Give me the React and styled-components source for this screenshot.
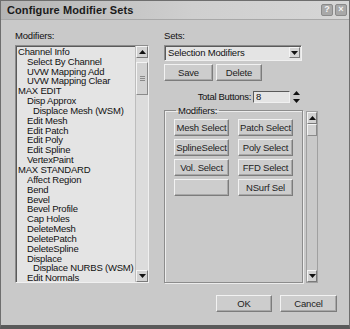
import React, { useState } from 'react';
import styled, { createGlobalStyle } from 'styled-components';

const GlobalStyle = createGlobalStyle`
  html, body {
    margin: 0;
    padding: 0;
    background: #c8c8c8;
  }
  * {
    box-sizing: border-box;
  }
`;

const Window = styled.div`
  width: 350px;
  height: 329px;
  display: flex;
  flex-direction: column;
  background: #c9c9c9;
  border: 1px solid #6e6e6e;
  border-bottom: 4px solid #5a5a5a;
  font-family: 'Liberation Sans', Arial, sans-serif;
  font-size: 9.5px;
  color: #111;
  overflow: hidden;
`;

const TitleBar = styled.div`
  height: 20px;
  display: flex;
  align-items: center;
  justify-content: space-between;
  padding: 0 2px 0 6px;
  background: linear-gradient(to right, #b4b4b4, #cfcfcf 55%, #d6d6d6);
  border-bottom: 1px solid #a8a8a8;
`;

const Title = styled.span`
  font-weight: bold;
  font-size: 11px;
  letter-spacing: 0.1px;
  color: #1a1a1a;
`;

const TitleButtons = styled.div`
  display: flex;
  gap: 2px;
`;

const TitleButton = styled.div`
  width: 12px;
  height: 12px;
  display: flex;
  align-items: center;
  justify-content: center;
  background: #a8a8a8;
  border: 1px solid #8a8a8a;
  border-radius: 2px;
  color: #f4f4f4;
  font-size: 9px;
  font-weight: bold;
  line-height: 1;
`;

const Body = styled.div`
  flex: 1;
  display: flex;
  gap: 15px;
  padding: 10px 0 0 14px;
`;

const LeftColumn = styled.div`
  width: 134px;
  display: flex;
  flex-direction: column;
`;

const Label = styled.div`
  height: 15px;
  line-height: 12px;
  letter-spacing: -0.2px;
`;

const ListBox = styled.div`
  height: 238px;
  display: flex;
  background: #e4e4e4;
  border: 1px solid #8c8c8c;
  border-right-color: #f0f0f0;
  border-bottom-color: #f0f0f0;
  box-shadow: inset 1px 1px 0 #5a5a5a;
`;

const ListItems = styled.div`
  flex: 1;
  padding: 1px 0 0 2px;
  overflow: hidden;
`;

const indents = [0, 9, 15];

const ListItem = styled.div`
  height: 9.85px;
  line-height: 10px;
  white-space: nowrap;
  letter-spacing: -0.2px;
  padding-left: ${(p) => indents[p.$level]}px;
`;

const ScrollBar = styled.div`
  width: 13px;
  display: flex;
  flex-direction: column;
  background: #dcdcdc;
  border-left: 1px solid #bdbdbd;
`;

const ScrollArrow = styled.div`
  height: 12px;
  display: flex;
  align-items: center;
  justify-content: center;
  background: #d2d2d2;
  border: 1px solid;
  border-color: #f4f4f4 #7a7a7a #7a7a7a #f4f4f4;
  color: #222;
`;

const ScrollTrack = styled.div`
  flex: 1;
  display: flex;
  flex-direction: column;
  padding-top: ${(p) => p.$offset || 0}px;
`;

const ScrollThumb = styled.div`
  height: ${(p) => p.$size}px;
  display: flex;
  align-items: center;
  justify-content: center;
  background: #d2d2d2;
  border: 1px solid;
  border-color: #f4f4f4 #8a8a8a #8a8a8a #f4f4f4;
`;

const Grip = styled.div`
  width: 5px;
  height: 5px;
  background: repeating-linear-gradient(to bottom, #8a8a8a 0 1px, transparent 1px 2px);
`;

const RightColumn = styled.div`
  width: 155px;
  display: flex;
  flex-direction: column;
`;

const Select = styled.div`
  width: 138px;
  height: 16px;
  display: flex;
  align-items: center;
  background: #e4e4e4;
  border: 1px solid #8c8c8c;
  border-right-color: #f0f0f0;
  border-bottom-color: #f0f0f0;
  box-shadow: inset 1px 1px 0 #5a5a5a;
  padding: 1px 1px 1px 3px;
`;

const SelectText = styled.span`
  flex: 1;
  letter-spacing: -0.2px;
`;

const SelectArrow = styled.div`
  width: 11px;
  height: 11px;
  display: flex;
  align-items: center;
  justify-content: center;
  background: #d4d4d4;
  border: 1px solid;
  border-color: #f4f4f4 #7a7a7a #7a7a7a #f4f4f4;
`;

const Row = styled.div`
  display: flex;
  gap: ${(p) => p.$gap || 0}px;
  align-items: center;
  justify-content: ${(p) => p.$justify || 'flex-start'};
  margin-top: ${(p) => p.$top || 0}px;
  padding-right: ${(p) => p.$right || 0}px;
`;

const Button = styled.button`
  width: ${(p) => p.$width}px;
  height: ${(p) => p.$height || 17}px;
  padding: 0;
  font-family: inherit;
  font-size: 9.5px;
  letter-spacing: -0.2px;
  white-space: nowrap;
  color: #222;
  background: #cdcdcd;
  border: 1px solid;
  border-color: #f2f2f2 #7c7c7c #7c7c7c #f2f2f2;
  box-shadow: inset -1px -1px 0 #a8a8a8;
`;

const SpinLabel = styled.span`
  letter-spacing: -0.3px;
`;

const SpinInput = styled.div`
  width: 37px;
  height: 12px;
  margin-left: 2px;
  line-height: 10px;
  padding-left: 2px;
  background: #e4e4e4;
  border: 1px solid;
  border-color: #5a5a5a #f0f0f0 #f0f0f0 #5a5a5a;
`;

const Spinner = styled.div`
  width: 7px;
  height: 12px;
  margin-left: 3px;
  display: flex;
  flex-direction: column;
  justify-content: space-between;
  align-items: center;
`;

const GroupRow = styled.div`
  display: flex;
  gap: 3px;
  margin-top: 2px;
`;

const GroupBox = styled.fieldset`
  width: 139px;
  height: 178px;
  margin: 0;
  padding: 3px 0 0 9px;
  border: 1px solid #8c8c8c;
  box-shadow: 1px 1px 0 #ececec, inset 1px 1px 0 #ececec;
`;

const Legend = styled.legend`
  padding: 0 2px;
  margin-left: 2px;
  letter-spacing: -0.2px;
`;

const ModGrid = styled.div`
  display: grid;
  grid-template-columns: 55px 55px;
  column-gap: 9px;
  row-gap: 3px;
`;

const SideScroll = styled.div`
  width: 12px;
  height: 172px;
  margin-top: 6px;
  display: flex;
  flex-direction: column;
  background: #c9c9c9;
  border: 1px solid #a0a0a0;
`;

const Footer = styled.div`
  height: 44px;
  display: flex;
  justify-content: flex-end;
  gap: 8px;
  padding: 12px 12px 0 0;
`;

const Up = () => (
  <svg width="7" height="4" viewBox="0 0 7 4">
    <path d="M0 4 L3.5 0 L7 4 Z" fill="#111" />
  </svg>
);

const Down = () => (
  <svg width="7" height="4" viewBox="0 0 7 4">
    <path d="M0 0 L3.5 4 L7 0 Z" fill="#111" />
  </svg>
);

const modifiers = [
  ['Channel Info', 0],
  ['Select By Channel', 1],
  ['UVW Mapping Add', 1],
  ['UVW Mapping Clear', 1],
  ['MAX EDIT', 0],
  ['Disp Approx', 1],
  ['Displace Mesh (WSM)', 2],
  ['Edit Mesh', 1],
  ['Edit Patch', 1],
  ['Edit Poly', 1],
  ['Edit Spline', 1],
  ['VertexPaint', 1],
  ['MAX STANDARD', 0],
  ['Affect Region', 1],
  ['Bend', 1],
  ['Bevel', 1],
  ['Bevel Profile', 1],
  ['Cap Holes', 1],
  ['DeleteMesh', 1],
  ['DeletePatch', 1],
  ['DeleteSpline', 1],
  ['Displace', 1],
  ['Displace NURBS (WSM)', 2],
  ['Edit Normals', 1],
];

const setButtons = [
  'Mesh Select',
  'Patch Select',
  'SplineSelect',
  'Poly Select',
  'Vol. Select',
  'FFD Select',
  '',
  'NSurf Sel',
];

const App = () => {
  const [total] = useState(8);

  return (
    <>
      <GlobalStyle />
      <Window>
        <TitleBar>
          <Title>Configure Modifier Sets</Title>
          <TitleButtons>
            <TitleButton>?</TitleButton>
            <TitleButton>×</TitleButton>
          </TitleButtons>
        </TitleBar>
        <Body>
          <LeftColumn>
            <Label>Modifiers:</Label>
            <ListBox>
              <ListItems>
                {modifiers.map(([name, level]) => (
                  <ListItem key={name} $level={level}>
                    {name}
                  </ListItem>
                ))}
              </ListItems>
              <ScrollBar>
                <ScrollArrow>
                  <Up />
                </ScrollArrow>
                <ScrollTrack $offset={4}>
                  <ScrollThumb $size={33}>
                    <Grip />
                  </ScrollThumb>
                </ScrollTrack>
                <ScrollArrow>
                  <Down />
                </ScrollArrow>
              </ScrollBar>
            </ListBox>
          </LeftColumn>
          <RightColumn>
            <Label>Sets:</Label>
            <Select>
              <SelectText>Selection Modifiers</SelectText>
              <SelectArrow>
                <Down />
              </SelectArrow>
            </Select>
            <Row $gap={3} $top={3}>
              <Button $width={49}>Save</Button>
              <Button $width={46}>Delete</Button>
            </Row>
            <Row $top={10} $justify="flex-end" $right={19}>
              <SpinLabel>Total Buttons:</SpinLabel>
              <SpinInput>{total}</SpinInput>
              <Spinner>
                <Up />
                <Down />
              </Spinner>
            </Row>
            <GroupRow>
              <GroupBox>
                <Legend>Modifiers:</Legend>
                <ModGrid>
                  {setButtons.map((label, i) => (
                    <Button key={i} $width={55} $height={17}>
                      {label}
                    </Button>
                  ))}
                </ModGrid>
              </GroupBox>
              <SideScroll>
                <ScrollArrow>
                  <Up />
                </ScrollArrow>
                <ScrollTrack>
                  <ScrollThumb $size={12} />
                </ScrollTrack>
                <ScrollArrow>
                  <Down />
                </ScrollArrow>
              </SideScroll>
            </GroupRow>
          </RightColumn>
        </Body>
        <Footer>
          <Button $width={56} $height={17}>OK</Button>
          <Button $width={57} $height={17}>Cancel</Button>
        </Footer>
      </Window>
    </>
  );
};

export default App;
